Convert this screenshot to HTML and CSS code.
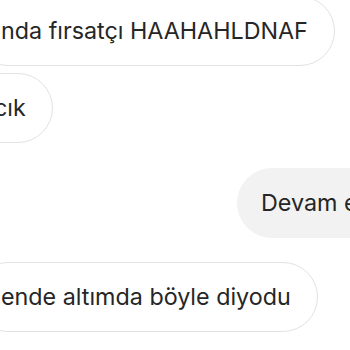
FILE: index.html
```html
<!DOCTYPE html>
<html lang="tr">
<head>
    <meta charset="UTF-8">
    <meta name="viewport" content="width=device-width, initial-scale=1.0">
    <title>Mesajlar</title>
    <link rel="stylesheet" href="styles.css">
</head>
<body>
    <div class="thread">
        <div class="row row-first">
            <div class="bubble bubble-in">nda fırsatçı HAAHAHLDNAF</div>
        </div>
        <div class="row row-tight">
            <div class="bubble bubble-in bubble-short">cık</div>
        </div>
        <div class="row row-out">
            <div class="bubble bubble-out">Devam ediyorum</div>
        </div>
        <div class="row">
            <div class="bubble bubble-in">ende altımda böyle diyodu</div>
        </div>
    </div>
</body>
</html>
```

FILE: styles.css
```css
html, body { margin: 0; padding: 0; background: #fff; overflow: hidden; }
body { font-family: Inter, "Liberation Sans", sans-serif; color: #262626; }
.thread { display: flex; flex-direction: column; width: 350px; }
.row { display: flex; margin-top: 24px; white-space: nowrap; }
.row-first { margin-top: -4px; }
.row-tight { margin-top: 7px; }
.row-out { margin-top: 25px; }
.bubble { font-size: 23.3px; line-height: 28px; padding: 20px 26px; border-radius: 35px; box-sizing: border-box; }
.bubble-in { border: 1px solid #e2e2e2; background: #fff; margin-left: -27px; padding-left: 27px; }
.bubble-short { margin-left: -34px; }
.bubble-out { background: #f2f2f2; border: 1px solid #f2f2f2; margin-left: 237px; padding-left: 23px; }
```
